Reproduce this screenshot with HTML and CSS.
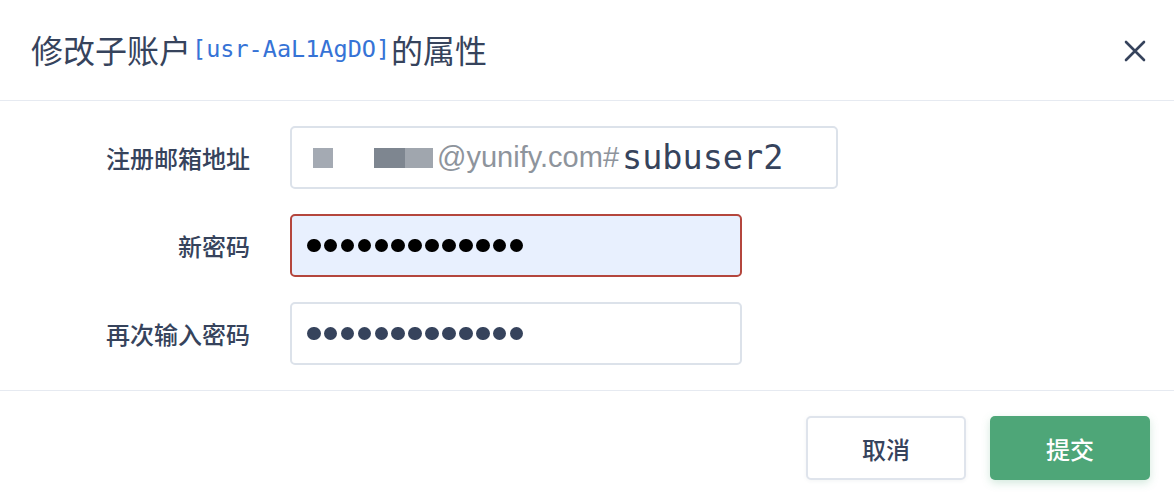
FILE: index.html
```html
<!DOCTYPE html>
<html lang="zh-CN">
<head>
<meta charset="utf-8">
<title>修改子账户</title>
<link rel="stylesheet" href="styles.css">
</head>
<body>
<div class="dialog">
  <div class="header">
    <h1 class="title">修改子账户<span class="uid">[usr-AaL1AgDO]</span>的属性</h1>
    <button class="close" aria-label="关闭">
      <svg width="22" height="22" viewBox="0 0 22 22"><path d="M2 2L20 20M20 2L2 20" stroke="#36435c" stroke-width="2.6" stroke-linecap="round"/></svg>
    </button>
  </div>
  <div class="body">
    <div class="row">
      <label class="label">注册邮箱地址</label>
      <div class="field field-wide">
        <span class="redact r1"></span>
        <span class="redact r2"></span><span class="redact r3"></span>
        <span class="domain">@yunify.com#</span><span class="user">subuser2</span>
      </div>
    </div>
    <div class="row">
      <label class="label">新密码</label>
      <div class="field field-error">
        <span class="dots dark"><i></i><i></i><i></i><i></i><i></i><i></i><i></i><i></i><i></i><i></i><i></i><i></i><i></i></span>
      </div>
    </div>
    <div class="row">
      <label class="label">再次输入密码</label>
      <div class="field">
        <span class="dots slate"><i></i><i></i><i></i><i></i><i></i><i></i><i></i><i></i><i></i><i></i><i></i><i></i><i></i></span>
      </div>
    </div>
  </div>
  <div class="footer">
    <button class="btn btn-cancel">取消</button>
    <button class="btn btn-submit">提交</button>
  </div>
</div>
</body>
</html>
```

FILE: styles.css
```css
* { box-sizing: border-box; }
html, body { margin: 0; padding: 0; background: #fff; }
body {
  font-family: "Noto Sans CJK SC", "Noto Sans", sans-serif;
  color: #36435c;
}
.dialog { width: 1174px; }
.header {
  height: 101px;
  display: flex;
  align-items: center;
  justify-content: space-between;
  padding: 0 28px 2px 31px;
  border-bottom: 1px solid #e6eaf1;
}
.title {
  margin: 0;
  font-size: 32px;
  font-weight: 400;
  line-height: 40px;
  color: #36435c;
  display: flex;
  align-items: center;
}
.uid {
  font-family: "DejaVu Sans Mono", monospace;
  font-size: 23.5px;
  color: #3673d6;
  margin: 0 1px;
}
.close {
  border: 0;
  background: none;
  padding: 0;
  margin-top: 4px;
  width: 22px;
  height: 22px;
  display: flex;
}
.body {
  padding: 25px 0 25px;
  display: flex;
  flex-direction: column;
  gap: 25px;
  border-bottom: 1px solid #e6eaf1;
}
.row {
  display: flex;
  align-items: center;
  gap: 40px;
}
.label {
  width: 250px;
  text-align: right;
  font-size: 24px;
  font-weight: 500;
  color: #36435c;
}
.field {
  width: 452px;
  height: 63px;
  border: 2px solid #dce2ea;
  border-radius: 5px;
  display: flex;
  align-items: center;
  padding-left: 15px;
}
.field-wide { width: 548px; padding-left: 21px; }
.field-error { border-color: #b4463d; background: #e8f0fe; }
.redact { display: block; height: 20px; }
.r1 { width: 20px; background: #a4aab3; margin-right: 41px; }
.r2 { width: 31px; background: #7e8690; }
.r3 { width: 28px; background: #a0a6ae; margin-right: 4px; }
.domain {
  font-family: "Liberation Sans", sans-serif;
  font-size: 29px;
  color: #8e949c;
}
.user {
  font-family: "DejaVu Sans Mono", monospace;
  font-size: 33.5px;
  color: #36435c;
  margin-left: 3px;
}
.dots { display: flex; gap: 3.3px; }
.dots i {
  display: block;
  width: 13.6px;
  height: 13.6px;
  border-radius: 50%;
}
.dark i { background: #000; }
.slate i { background: #36435c; }
.footer {
  display: flex;
  justify-content: flex-end;
  gap: 24px;
  padding: 25px 24px 12px;
}
.btn {
  width: 160px;
  height: 64px;
  border-radius: 5px;
  font-family: "Noto Sans CJK SC", sans-serif;
  font-size: 24px;
  font-weight: 500;
  cursor: pointer;
}
.btn-cancel {
  background: #fff;
  border: 2px solid #dfe4ec;
  color: #36435c;
  box-shadow: 0 1px 4px rgba(54, 67, 92, 0.06);
}
.btn-submit {
  background: #4ea678;
  border: 0;
  color: #fff;
  box-shadow: 0 3px 8px rgba(78, 166, 120, 0.25);
}
```
